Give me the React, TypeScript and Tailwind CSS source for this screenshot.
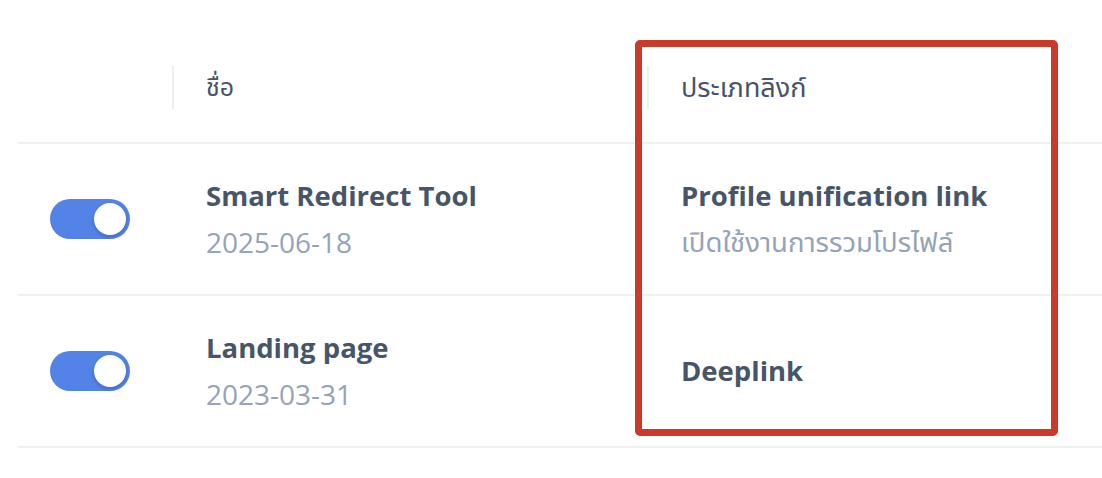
import React from 'react'

interface LinkRow {
  name: string
  date: string
  type: string
  note?: string
  enabled: boolean
}

const rows: LinkRow[] = [
  {
    name: 'Smart Redirect Tool',
    date: '2025-06-18',
    type: 'Profile unification link',
    note: 'เปิดใช้งานการรวมโปรไฟล์',
    enabled: true,
  },
  { name: 'Landing page', date: '2023-03-31', type: 'Deeplink', enabled: true },
]

const font = { fontFamily: '"Open Sans", "Noto Sans", "Noto Sans Thai", sans-serif' }

function Toggle({ on }: { on: boolean }) {
  return (
    <div
      className={
        'flex h-[40px] w-[80px] items-center rounded-full px-[4px] ' +
        (on ? 'justify-end bg-[#5383e6]' : 'justify-start bg-gray-300')
      }
    >
      <div className="h-[32px] w-[32px] rounded-full bg-white shadow-[0_2px_4px_rgba(0,0,0,0.18)]" />
    </div>
  )
}

export default function App() {
  return (
    <div className="relative h-[478px] w-[1102px] overflow-hidden bg-white" style={font}>
      <div className="ml-[18px]">
        {/* header */}
        <div className="grid h-[144px] grid-cols-[154px_475px_1fr] border-b-2 border-[#f0f0f0] pt-[32px]">
          <div />
          <div className="flex items-center">
            <div className="flex h-[43px] items-center border-l-2 border-[#eeeeee] pl-[32px] text-[25px] text-[#475569]">
              ชื่อ
            </div>
          </div>
          <div className="flex items-center">
            <div className="flex h-[43px] items-center border-l-2 border-[#eeeeee] pl-[32px] text-[27px] text-[#475569]">
              ประเภทลิงก์
            </div>
          </div>
        </div>

        {rows.map(row => (
          <div
            key={row.name}
            className="grid h-[152px] grid-cols-[154px_475px_1fr] items-center border-b-2 border-[#f0f0f0]"
          >
            <div className="pl-[32px]">
              <Toggle on={row.enabled} />
            </div>
            <div className="pl-[34px]">
              <div className="text-[27.5px] font-bold leading-[38px] text-[#475569]">{row.name}</div>
              <div className="mt-[8px] text-[28px] leading-[38px] text-[#94a3b8]">{row.date}</div>
            </div>
            <div className="pl-[34px]">
              <div className="text-[27.5px] font-bold leading-[38px] text-[#475569]">{row.type}</div>
              {row.note && (
                <div className="mt-[8px] text-[27.5px] leading-[38px] text-[#94a3b8]">{row.note}</div>
              )}
            </div>
          </div>
        ))}
      </div>

      {/* annotation box */}
      <div className="absolute left-[635px] top-[40px] h-[396px] w-[423px] rounded-[5px] border-[7px] border-[#c93a2b]" />
    </div>
  )
}
